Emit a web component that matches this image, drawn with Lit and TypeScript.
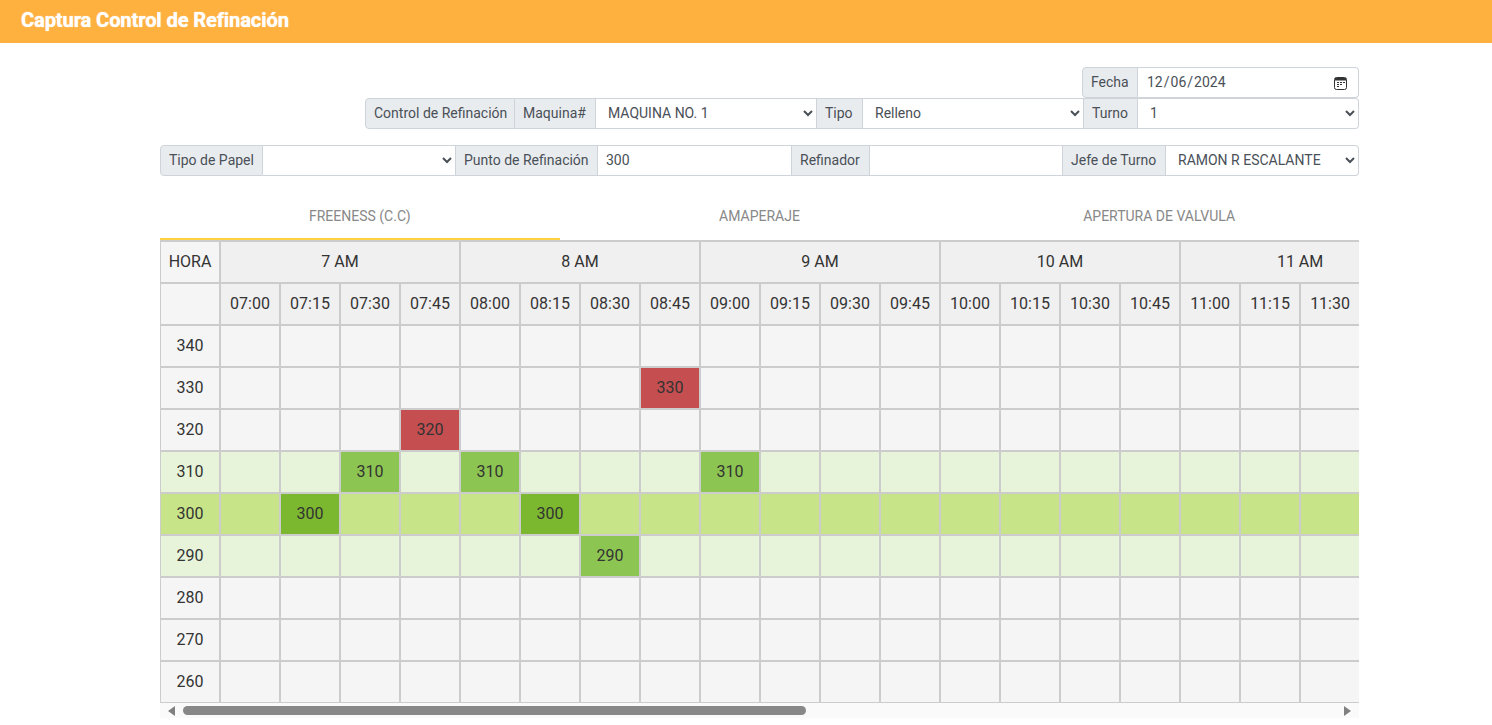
import { LitElement, html, css } from "lit";
import { customElement } from "lit/decorators.js";

const HOURS = ["7 AM", "8 AM", "9 AM", "10 AM", "11 AM"];
const QUARTERS = ["00", "15", "30", "45"];
const LEVELS = [340, 330, 320, 310, 300, 290, 280, 270, 260];
// freeness reading captured per time slot
const READINGS: Record<string, number> = {
  "07:15": 300,
  "07:30": 310,
  "07:45": 320,
  "08:00": 310,
  "08:15": 300,
  "08:30": 290,
  "08:45": 330,
  "09:00": 310,
};

const slots = HOURS.flatMap((_, i) => QUARTERS.map((q) => `${String(i + 7).padStart(2, "0")}:${q}`));

@customElement("app-root")
export class AppRoot extends LitElement {
  static styles = css`
    :host {
      display: block;
      font-family: Roboto, "Liberation Sans", sans-serif;
      font-size: 14px;
      color: #495057;
    }
    .topbar {
      height: 43px;
      background: #ffb140;
      display: flex;
      align-items: center;
      padding: 0 0 4px 21px;
      box-sizing: border-box;
      color: #fff;
      font-size: 20px;
      font-weight: 700;
      letter-spacing: -0.07px;
      text-shadow: 0 0 1px #fff;
    }
    .page {
      padding: 24px 133px 0 160px;
    }
    .group {
      display: grid;
      height: 31px;
      justify-content: end;
    }
    .group.fecha {
      grid-template-columns: 56px 221px;
    }
    .group.control {
      grid-template-columns: 150px 81px 221px 46px 221px 54px 221px;
    }
    .group.spaced {
      grid-template-columns: 103px 193px 142px 194px 78px 193px 103px 193px;
      margin-top: 16px;
    }
    .group > * {
      box-sizing: border-box;
      height: 31px;
      border: 1px solid #ced4da;
      border-left: 0;
      font-family: inherit;
      font-size: 14px;
      color: #495057;
    }
    .group > *:first-child {
      border-left: 1px solid #ced4da;
      border-radius: 4px 0 0 4px;
    }
    .group > *:last-child {
      border-radius: 0 4px 4px 0;
    }
    .addon {
      display: flex;
      align-items: center;
      padding: 0 0 2px 8px;
      background: #e9ecef;
      white-space: nowrap;
    }
    .field {
      min-width: 0;
      width: 100%;
      background: #fff;
      padding: 0 8px 2px;
      outline: none;
    }
    select.field {
      padding: 0 3px 2px 8px;
    }
    .date-wrap {
      position: relative;
    }
    .date-wrap input {
      box-sizing: border-box;
      width: 100%;
      height: 100%;
      border: 0;
      outline: none;
      background: transparent;
      padding: 0 8px 2px;
      font-family: inherit;
      font-size: 14px;
      color: #495057;
    }
    .date-wrap input::-webkit-calendar-picker-indicator {
      opacity: 0;
    }
    .date-wrap svg {
      position: absolute;
      right: 11px;
      top: 9px;
      pointer-events: none;
    }
    .tabs {
      display: flex;
      margin-top: 17px;
    }
    .tab {
      flex: 1;
      height: 47px;
      box-sizing: border-box;
      padding-top: 15px;
      text-align: center;
      font-size: 14px;
      color: #888;
    }
    .tab.active {
      border-bottom: 2px solid #ffd040;
    }
    .scroller {
      overflow: hidden;
      height: 463px;
    }
    table {
      border-collapse: collapse;
      table-layout: fixed;
      width: 1260px;
      margin-left: -1px;
      color: #333;
      font-size: 16px;
    }
    col {
      width: 60px;
    }
    tr {
      height: 42px;
    }
    th,
    td {
      box-sizing: border-box;
      border: 2px solid #ccc;
      padding: 0 0 2px;
      text-align: center;
      font-weight: 400;
      background: #f5f5f5;
    }
    .head {
      background: #f0f0f0;
    }
    .hora {
      background: #f5f5f5;
    }
    tr.near td,
    tr.near .hora {
      background: #e7f4d9;
    }
    tr.target td,
    tr.target .hora {
      background: #c7e488;
    }
    tr td.ok {
      background: #8dc552;
    }
    tr td.hit {
      background: #7bb72f;
    }
    tr td.off {
      background: #c44e50;
    }
    .scrollbar {
      height: 15px;
      background: #fafafa;
      display: flex;
      align-items: center;
      padding: 0 7px;
    }
    .scrollbar svg {
      flex: none;
      fill: #808080;
    }
    .thumb {
      width: 623px;
      height: 9px;
      margin-left: 8px;
      margin-right: auto;
      border-radius: 5px;
      background: #888;
    }
  `;

  private markClass(value: number) {
    if (value === 300) return "hit";
    if (value === 310 || value === 290) return "ok";
    return "off";
  }

  private rowClass(level: number) {
    if (level === 300) return "target";
    if (level === 310 || level === 290) return "near";
    return "";
  }

  render() {
    return html`
      <div class="topbar">Captura Control de Refinación</div>
      <div class="page">
        <div class="group fecha">
          <span class="addon">Fecha</span>
          <div class="date-wrap">
            <input type="date" value="2024-12-06" />
            <svg width="13" height="13" viewBox="0 0 13 13">
              <rect x="0.5" y="0.5" width="12" height="12" rx="2" fill="none" stroke="#333" />
              <rect x="1" y="1" width="11" height="2.5" fill="#333" />
              <path d="M3 5h2v1H3zM6 5h2v1H6zM9 5h2v1H9zM3 7h2v1H3zM6 7h2v1H6zM3 9h2v1H3z" fill="#333" />
            </svg>
          </div>
        </div>
        <div class="group control">
          <span class="addon">Control de Refinación</span>
          <span class="addon">Maquina#</span>
          <select class="field"><option>MAQUINA NO. 1</option></select>
          <span class="addon">Tipo</span>
          <select class="field"><option>Relleno</option></select>
          <span class="addon">Turno</span>
          <select class="field"><option>1</option></select>
        </div>
        <div class="group spaced">
          <span class="addon">Tipo de Papel</span>
          <select class="field"><option></option></select>
          <span class="addon">Punto de Refinación</span>
          <input class="field" value="300" />
          <span class="addon">Refinador</span>
          <input class="field" />
          <span class="addon">Jefe de Turno</span>
          <select class="field"><option>RAMON R ESCALANTE</option></select>
        </div>
        <div class="tabs">
          <div class="tab active">FREENESS (C.C)</div>
          <div class="tab">AMAPERAJE</div>
          <div class="tab">APERTURA DE VALVULA</div>
        </div>
        <div class="scroller">
          <table>
            <colgroup>
              <col />
              ${slots.map(() => html`<col />`)}
            </colgroup>
            <tr>
              <th class="hora">HORA</th>
              ${HOURS.map((h) => html`<th class="head" colspan="4">${h}</th>`)}
            </tr>
            <tr>
              <th class="hora"></th>
              ${slots.map((s) => html`<th class="head">${s}</th>`)}
            </tr>
            ${LEVELS.map(
              (level) => html`
                <tr class=${this.rowClass(level)}>
                  <th class="hora">${level}</th>
                  ${slots.map((s) =>
                    READINGS[s] === level
                      ? html`<td class=${this.markClass(level)}>${level}</td>`
                      : html`<td></td>`
                  )}
                </tr>
              `
            )}
          </table>
        </div>
        <div class="scrollbar">
          <svg width="8" height="10" viewBox="0 0 8 10"><path d="M8 0v10L1 5z" /></svg>
          <div class="thumb"></div>
          <svg width="8" height="10" viewBox="0 0 8 10"><path d="M0 0v10l7-5z" /></svg>
        </div>
      </div>
    `;
  }
}
